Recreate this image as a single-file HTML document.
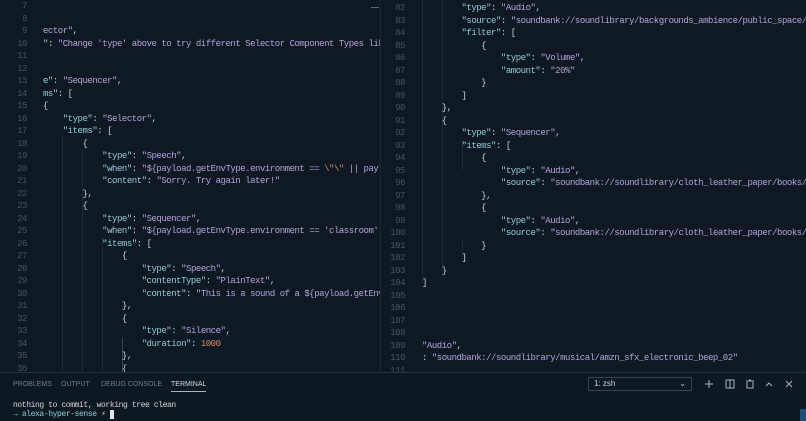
<!DOCTYPE html>
<html><head><meta charset="utf-8"><style>
html,body{margin:0;padding:0;width:806px;height:420px;overflow:hidden;background:#0e1923;}
.mono{font-family:"Liberation Mono","DejaVu Sans Mono",monospace;font-size:9px;letter-spacing:-0.47px;}
.pane{position:absolute;overflow:hidden;}
.ln{position:absolute;color:#46555f;text-align:right;width:24px;}
.code{position:absolute;}
.l{height:12.5px;line-height:12.5px;white-space:pre;}
.k{color:#96cad8}.s{color:#b7a3dc}.p{color:#c9d1d8}.n{color:#d98a67}.e{color:#d98a67}
.g{position:absolute;width:1px;background:#1f2c36;}
</style></head><body>
<!-- left pane -->
<div class="pane mono" style="left:0;top:0;width:380px;height:372px;">
<div class="g" style="left:62px;top:137px;height:235px"></div>
<div class="g" style="left:82px;top:150px;height:222px"></div>
<div class="g" style="left:102px;top:237px;height:135px"></div>
<div class="g" style="left:122px;top:337px;height:35px;background:#3a4852"></div>
<div class="ln" style="left:3px;top:0"><div class="l">7</div><div class="l">8</div><div class="l">9</div><div class="l">10</div><div class="l">11</div><div class="l">12</div><div class="l">13</div><div class="l">14</div><div class="l">15</div><div class="l">16</div><div class="l">17</div><div class="l">18</div><div class="l">19</div><div class="l">20</div><div class="l">21</div><div class="l">22</div><div class="l">23</div><div class="l">24</div><div class="l">25</div><div class="l">26</div><div class="l">27</div><div class="l">28</div><div class="l">29</div><div class="l">30</div><div class="l">31</div><div class="l">32</div><div class="l">33</div><div class="l">34</div><div class="l">35</div><div class="l">36</div></div>
<div class="code" style="left:43px;top:0">
<div class="l"> </div>
<div class="l"> </div>
<div class="l"><span class="s">ector"</span><span class="p">,</span></div>
<div class="l"><span class="k">"</span><span class="p">: </span><span class="s">"Change 'type' above to try different Selector Component Types lik</span></div>
<div class="l"> </div>
<div class="l"> </div>
<div class="l"><span class="k">e"</span><span class="p">: </span><span class="s">"Sequencer"</span><span class="p">,</span></div>
<div class="l"><span class="k">ms"</span><span class="p">: [</span></div>
<div class="l"><span class="p">{</span></div>
<div class="l">    <span class="k">"type"</span><span class="p">: </span><span class="s">"Selector"</span><span class="p">,</span></div>
<div class="l">    <span class="k">"items"</span><span class="p">: [</span></div>
<div class="l">        <span class="p">{</span></div>
<div class="l">            <span class="k">"type"</span><span class="p">: </span><span class="s">"Speech"</span><span class="p">,</span></div>
<div class="l">            <span class="k">"when"</span><span class="p">: </span><span class="s">"${payload.getEnvType.environment == <span class="e">\"\"</span> || payl</span></div>
<div class="l">            <span class="k">"content"</span><span class="p">: </span><span class="s">"Sorry. Try again later!"</span></div>
<div class="l">        <span class="p">},</span></div>
<div class="l">        <span class="p">{</span></div>
<div class="l">            <span class="k">"type"</span><span class="p">: </span><span class="s">"Sequencer"</span><span class="p">,</span></div>
<div class="l">            <span class="k">"when"</span><span class="p">: </span><span class="s">"${payload.getEnvType.environment == 'classroom'</span></div>
<div class="l">            <span class="k">"items"</span><span class="p">: [</span></div>
<div class="l">                <span class="p">{</span></div>
<div class="l">                    <span class="k">"type"</span><span class="p">: </span><span class="s">"Speech"</span><span class="p">,</span></div>
<div class="l">                    <span class="k">"contentType"</span><span class="p">: </span><span class="s">"PlainText"</span><span class="p">,</span></div>
<div class="l">                    <span class="k">"content"</span><span class="p">: </span><span class="s">"This is a sound of a ${payload.getEnv</span></div>
<div class="l">                <span class="p">},</span></div>
<div class="l">                <span class="p">{</span></div>
<div class="l">                    <span class="k">"type"</span><span class="p">: </span><span class="s">"Silence"</span><span class="p">,</span></div>
<div class="l">                    <span class="k">"duration"</span><span class="p">: </span><span class="n">1000</span></div>
<div class="l">                <span class="p">},</span></div>
<div class="l">                <span class="p">{</span></div>
</div>
<div style="position:absolute;left:371px;top:7px;width:8px;height:1px;background:#5a6a75"></div>
</div>
<div style="position:absolute;left:380px;top:0;width:1px;height:372px;background:#1a2631"></div>
<!-- right pane -->
<div class="pane mono" style="left:381px;top:0;width:425px;height:372px;">
<div class="g" style="left:41px;top:0;height:282px"></div>
<div class="g" style="left:61px;top:0;height:270px"></div>
<div class="g" style="left:81px;top:140px;height:30px"></div>
<div class="g" style="left:81px;top:240px;height:20px"></div>
<div class="ln" style="left:0;top:2px"><div class="l">82</div><div class="l">83</div><div class="l">84</div><div class="l">85</div><div class="l">86</div><div class="l">87</div><div class="l">88</div><div class="l">89</div><div class="l">90</div><div class="l">91</div><div class="l">92</div><div class="l">93</div><div class="l">94</div><div class="l">95</div><div class="l">96</div><div class="l">97</div><div class="l">98</div><div class="l">99</div><div class="l">100</div><div class="l">101</div><div class="l">102</div><div class="l">103</div><div class="l">104</div><div class="l">105</div><div class="l">106</div><div class="l">107</div><div class="l">108</div><div class="l">109</div><div class="l">110</div><div class="l">111</div></div>
<div class="code" style="left:41px;top:2px">
<div class="l">        <span class="k">"type"</span><span class="p">: </span><span class="s">"Audio"</span><span class="p">,</span></div>
<div class="l">        <span class="k">"source"</span><span class="p">: </span><span class="s">"soundbank://soundlibrary/backgrounds_ambience/public_space/</span></div>
<div class="l">        <span class="k">"filter"</span><span class="p">: [</span></div>
<div class="l">            <span class="p">{</span></div>
<div class="l">                <span class="k">"type"</span><span class="p">: </span><span class="s">"Volume"</span><span class="p">,</span></div>
<div class="l">                <span class="k">"amount"</span><span class="p">: </span><span class="s">"20%"</span></div>
<div class="l">            <span class="p">}</span></div>
<div class="l">        <span class="p">]</span></div>
<div class="l">    <span class="p">},</span></div>
<div class="l">    <span class="p">{</span></div>
<div class="l">        <span class="k">"type"</span><span class="p">: </span><span class="s">"Sequencer"</span><span class="p">,</span></div>
<div class="l">        <span class="k">"items"</span><span class="p">: [</span></div>
<div class="l">            <span class="p">{</span></div>
<div class="l">                <span class="k">"type"</span><span class="p">: </span><span class="s">"Audio"</span><span class="p">,</span></div>
<div class="l">                <span class="k">"source"</span><span class="p">: </span><span class="s">"soundbank://soundlibrary/cloth_leather_paper/books/</span></div>
<div class="l">            <span class="p">},</span></div>
<div class="l">            <span class="p">{</span></div>
<div class="l">                <span class="k">"type"</span><span class="p">: </span><span class="s">"Audio"</span><span class="p">,</span></div>
<div class="l">                <span class="k">"source"</span><span class="p">: </span><span class="s">"soundbank://soundlibrary/cloth_leather_paper/books/</span></div>
<div class="l">            <span class="p">}</span></div>
<div class="l">        <span class="p">]</span></div>
<div class="l">    <span class="p">}</span></div>
<div class="l"><span class="p">]</span></div>
<div class="l"> </div><div class="l"> </div><div class="l"> </div><div class="l"> </div>
<div class="l"><span class="s">"Audio"</span><span class="p">,</span></div>
<div class="l"><span class="p">: </span><span class="s">"soundbank://soundlibrary/musical/amzn_sfx_electronic_beep_02"</span></div>
</div>
</div>
<!-- panel -->
<div style="position:absolute;left:0;top:372px;width:806px;height:48px;background:#0d1821;border-top:1px solid #24323d;font-family:'Liberation Sans',sans-serif;font-size:7px;color:#6f7d88;">
<div style="position:absolute;left:13px;top:8px">PROBLEMS</div>
<div style="position:absolute;left:61px;top:8px">OUTPUT</div>
<div style="position:absolute;left:101px;top:8px">DEBUG CONSOLE</div>
<div style="position:absolute;left:171px;top:8px;color:#d8dee3;padding-bottom:3px;border-bottom:1px solid #aab4bc">TERMINAL</div>
<div style="position:absolute;left:588px;top:4px;width:104px;height:14px;border:1px solid #34434e;box-sizing:border-box;color:#c8d0d6;font-size:8px;line-height:12px;padding-left:5px">1: zsh<span style="position:absolute;right:5px;top:0;font-size:8px">⌄</span></div>
<svg style="position:absolute;left:703px;top:5px" width="100" height="12" viewBox="0 0 100 12" fill="none" stroke="#aab4bc" stroke-width="1">
<path d="M6 2v8M2 6h8"/>
<rect x="23" y="2" width="8" height="8"/><path d="M27 2v8"/>
<path d="M43 3h8M46 2h2M44 4v6h6V4"/>
<path d="M63 8l3-3 3 3"/>
<path d="M83 3l6 6M89 3l-6 6"/>
</svg>
<div class="mono" style="position:absolute;left:13px;top:29px;font-size:8px;letter-spacing:-0.4px;color:#d2d8dd;line-height:8.5px;white-space:pre">nothing to commit, working tree clean<br><span style="color:#7fc9a5">→</span> <span style="color:#8fd0d8">alexa-hyper-sense</span> <span style="color:#d7c27a">⚡</span> <span style="background:#e0e6ea"> </span></div>
<div style="position:absolute;left:800px;top:36px;width:6px;height:12px;background:#1f4e79"></div>
</div>
</body></html>
